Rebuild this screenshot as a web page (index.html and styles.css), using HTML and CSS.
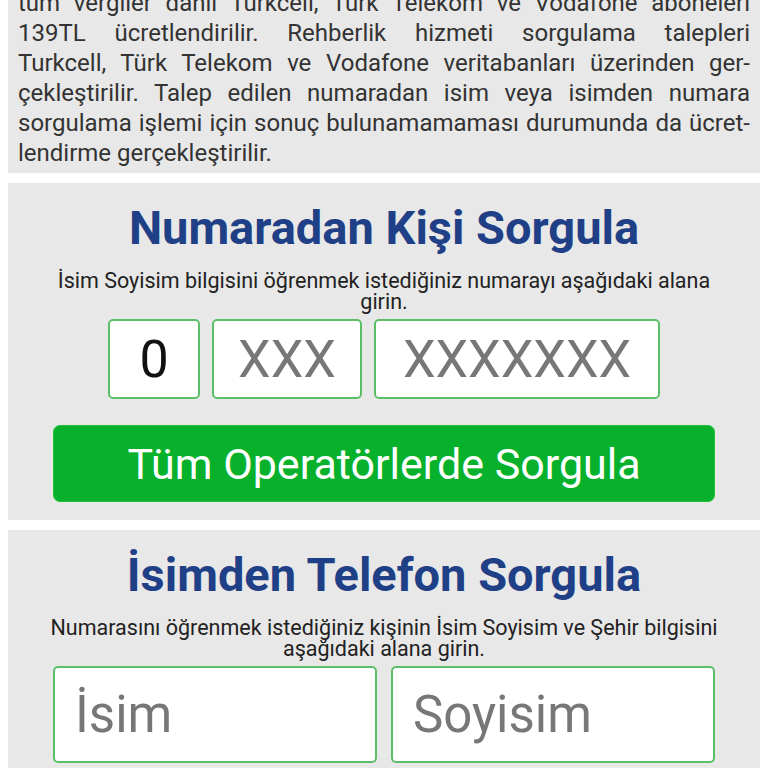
FILE: index.html
```html
<!DOCTYPE html>
<html lang="tr">
<head>
<meta charset="UTF-8">
<meta name="viewport" content="width=device-width, initial-scale=1.0">
<title>Rehber Sorgulama</title>
<link rel="stylesheet" href="styles.css">
</head>
<body>
<div class="panel info">
  <p class="info-text">
    <span>tüm vergiler dahil Turkcell, Türk Telekom ve Vodafone aboneleri</span>
    <span>139TL ücretlendirilir. Rehberlik hizmeti sorgulama talepleri</span>
    <span>Turkcell, Türk Telekom ve Vodafone veritabanları üzerinden ger-</span>
    <span>çekleştirilir. Talep edilen numaradan isim veya isimden numara</span>
    <span>sorgulama işlemi için sonuç bulunamamaması durumunda da ücret-</span>
    <span>lendirme gerçekleştirilir.</span>
  </p>
</div>

<!-- Numaradan sorgulama -->
<section class="panel query">
  <h2>Numaradan Kişi Sorgula</h2>
  <p class="hint">İsim Soyisim bilgisini öğrenmek istediğiniz numarayı aşağıdaki alana girin.</p>
  <div class="phone-row">
    <input class="box box-code" type="text" value="0" readonly>
    <input class="box box-area" type="text" placeholder="XXX" maxlength="3">
    <input class="box box-number" type="text" placeholder="XXXXXXX" maxlength="7">
  </div>
  <button class="btn-query">Tüm Operatörlerde Sorgula</button>
</section>

<!-- Isimden sorgulama -->
<section class="panel query">
  <h2>İsimden Telefon Sorgula</h2>
  <p class="hint">Numarasını öğrenmek istediğiniz kişinin İsim Soyisim ve Şehir bilgisini aşağıdaki alana girin.</p>
  <div class="name-row">
    <input class="box box-name" type="text" placeholder="İsim">
    <input class="box box-name" type="text" placeholder="Soyisim">
  </div>
</section>
</body>
</html>
```

FILE: styles.css
```css
body {
  font-family: Roboto, "Noto Sans", Arial, sans-serif;
  background-color: #fff;
  color: #333;
  margin: 0 8px;
}

.panel {
  background-color: #e8e8e8;
  margin-bottom: 10px;
}

/* info block at the top, scrolled partly out of view */
.info {
  margin-top: -22px;
  padding: 10px 10px 5px;
}

.info-text {
  margin: 0;
  font-size: 24px;
  line-height: 30px;
  color: #333;
}

.info-text span {
  display: block;
  white-space: nowrap;
  text-align: justify;
  text-align-last: justify;
}

.info-text span:last-child {
  text-align-last: left;
}

.query {
  padding: 17px 45px 18px;
  display: flex;
  flex-direction: column;
  align-items: center;
}

.query h2 {
  margin: 0;
  font-size: 47px;
  line-height: 55px;
  font-weight: 700;
  color: #1f3f86;
  text-align: center;
}

.hint {
  margin: 15px -14px 7px;
  font-size: 21.5px;
  line-height: 21px;
  color: #222;
  text-align: center;
}

.box {
  box-sizing: border-box;
  border: 2px solid #5cbf68;
  border-radius: 5px;
  background-color: #fff;
  font-family: Roboto, Arial, sans-serif;
  font-size: 52px;
  color: #111;
  outline: none;
}

.box::placeholder {
  color: #777;
}

.phone-row {
  display: flex;
  gap: 12px;
}

.phone-row .box {
  height: 80px;
  text-align: center;
  padding: 0;
}

.box-code {
  width: 92px;
}

.box-area {
  width: 150px;
}

.box-number {
  width: 286px;
}

.btn-query {
  margin-top: 26px;
  width: 100%;
  height: 77px;
  border: 1px solid #22c23c;
  border-radius: 7px;
  background-color: #08b12b;
  color: #fff;
  font-family: Roboto, Arial, sans-serif;
  font-size: 43px;
  cursor: pointer;
}

.name-row {
  display: flex;
  gap: 14px;
  width: 100%;
}

.box-name {
  flex: 1;
  min-width: 0;
  height: 97px;
  padding: 0 20px;
  font-size: 51px;
}
```
